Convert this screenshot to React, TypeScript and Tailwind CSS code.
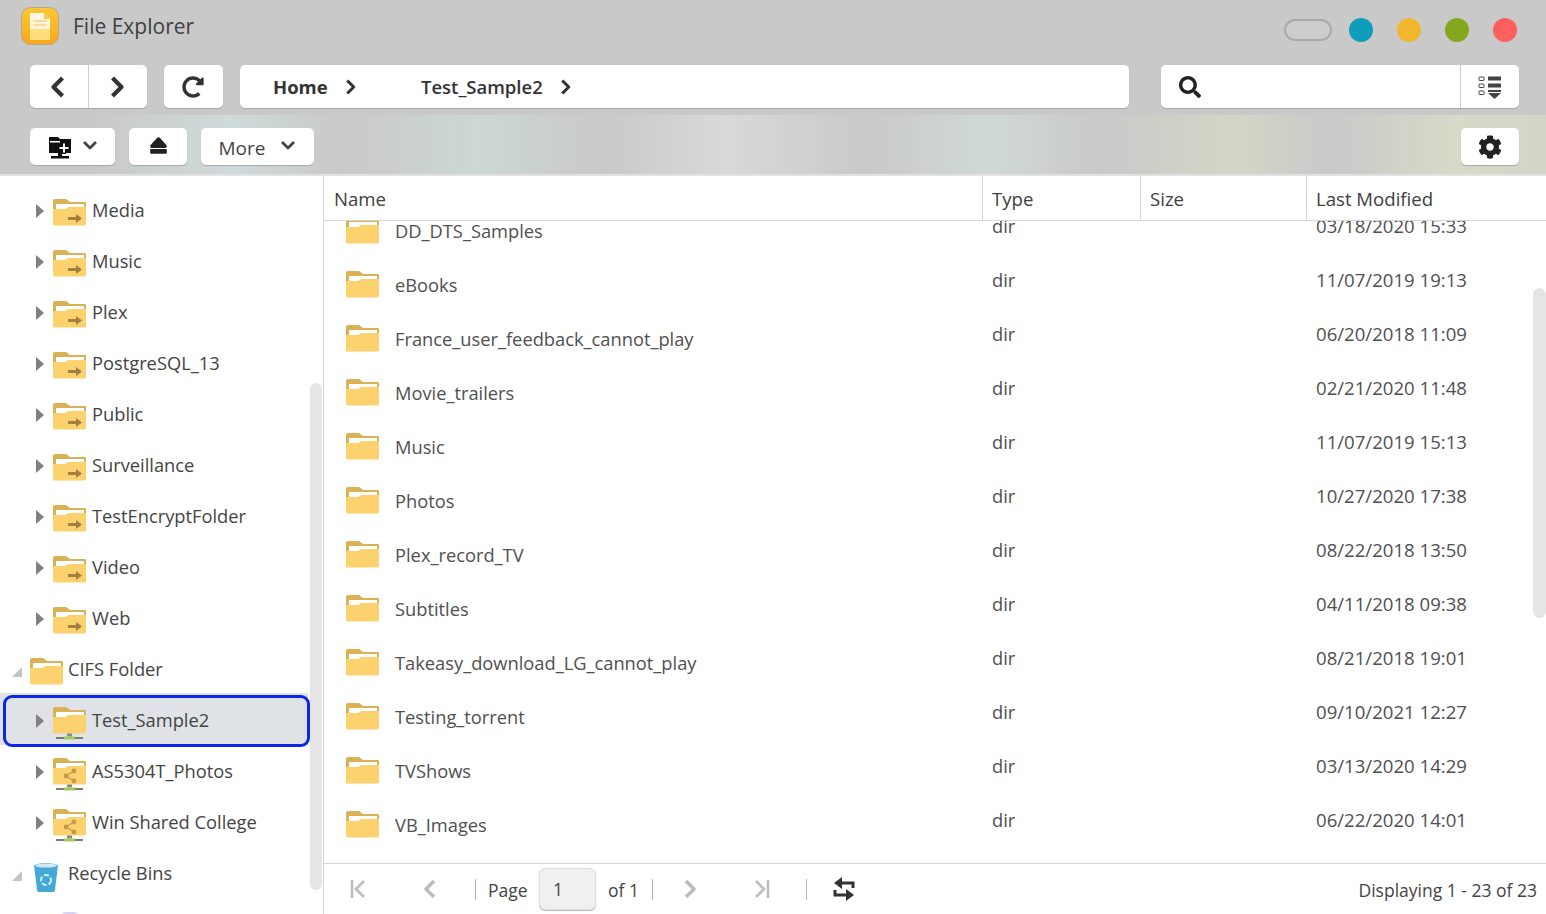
import { FaCog, FaEject, FaRedoAlt, FaSearch } from 'react-icons/fa';

const treeTop = ['Media', 'Music', 'Plex', 'PostgreSQL_13', 'Public', 'Surveillance', 'TestEncryptFolder', 'Video', 'Web'];

const files = [
  ['DD_DTS_Samples', '03/18/2020 15:33'],
  ['eBooks', '11/07/2019 19:13'],
  ['France_user_feedback_cannot_play', '06/20/2018 11:09'],
  ['Movie_trailers', '02/21/2020 11:48'],
  ['Music', '11/07/2019 15:13'],
  ['Photos', '10/27/2020 17:38'],
  ['Plex_record_TV', '08/22/2018 13:50'],
  ['Subtitles', '04/11/2018 09:38'],
  ['Takeasy_download_LG_cannot_play', '08/21/2018 19:01'],
  ['Testing_torrent', '09/10/2021 12:27'],
  ['TVShows', '03/13/2020 14:29'],
  ['VB_Images', '06/22/2020 14:01'],
];

function Chevron({ dir, className = '' }: { dir: 'left' | 'right' | 'down'; className?: string }) {
  const points = dir === 'left' ? '9,2 3,8 9,14' : dir === 'right' ? '3,2 9,8 3,14' : '2,4 8,10 14,4';
  return (
    <svg viewBox={dir === 'down' ? '0 0 16 14' : '0 0 12 16'} className={className} fill="none" stroke="currentColor" strokeWidth="2.8" strokeLinejoin="round">
      <polyline points={points} />
    </svg>
  );
}

function Folder({ kind = 'plain', className = 'w-[33px] h-[28px]' }: { kind?: 'plain' | 'arrow' | 'net' | 'share'; className?: string }) {
  const tall = kind === 'net' || kind === 'share';
  return (
    <svg viewBox={tall ? '0 0 33 33' : '0 0 33 28'} className={className}>
      <path d="M0 2 Q0 0 2 0 H13 L17 3 H32 Q33 3 33 4 V12 H0 Z" fill="#dbb155" />
      <path d="M3 5 H31 V12 H3 Z" fill="#ffffff" />
      <path d="M0 10 H12 L15 8 H33 V25 Q33 26.500 31.500 26.500 H1.500 Q0 26.500 0 25 Z" fill="#fbd26e" />
      <path d="M3 10 H12 L15 8 H31 V6 H3 Z" fill="#ffffff" />
      {kind === 'arrow' && (
        <path d="M15 18 H23 V15 L29 19.500 L23 24 V21 H15 Z" fill="#a47f40" />
      )}
      {kind === 'share' && (
        <g stroke="#c39a4c" strokeWidth="1.2" fill="#c39a4c">
          <line x1="13" y1="18" x2="21" y2="13" />
          <line x1="13" y1="18" x2="21" y2="23" />
          <circle cx="13" cy="18" r="1.800" />
          <circle cx="21" cy="13" r="1.800" />
          <circle cx="21" cy="23" r="1.800" />
        </g>
      )}
      {tall && (
        <g>
          <rect x="14" y="26.500" width="5" height="3" fill="#8a8a80" />
          <rect x="3" y="30" width="9" height="2" fill="#7c7c72" />
          <rect x="21" y="30" width="9" height="2" fill="#7c7c72" />
          <rect x="11" y="29.500" width="11" height="3" fill="#9ecb5a" />
        </g>
      )}
    </svg>
  );
}

function Caret({ open = false }: { open?: boolean }) {
  if (open) {
    return (
      <svg viewBox="0 0 10 10" className="w-[10px] h-[10px]">
        <polygon points="10,0 10,10 0,10" fill="#c4c4c4" />
      </svg>
    );
  }
  return (
    <svg viewBox="0 0 8 14" className="w-[8px] h-[14px]">
      <polygon points="0,0 8,7 0,14" fill="#808080" />
    </svg>
  );
}

function TreeChild({ label, kind, selected = false }: { label: string; kind: 'arrow' | 'net' | 'share'; selected?: boolean }) {
  return (
    <div className="relative flex h-[51px] items-center pl-[36px]">
      {selected && (
        <div className="absolute left-0 top-[-3px] h-[52px] w-[308px] bg-[#dfe3e8]">
          <div className="absolute left-[3px] top-[2px] h-[52px] w-[307px] rounded-[9px] border-[3px] border-[#0a28e6] bg-[#dfe3e8]" />
        </div>
      )}
      <span className="relative mt-[-2px] w-[17px]"><Caret /></span>
      <span className="relative w-[39px]">
        <Folder kind={kind} className={kind === 'arrow' ? 'mt-[3px] h-[28px] w-[33px]' : 'mt-[3px] h-[33px] w-[33px]'} />
      </span>
      <span className="relative mt-[-3px]">{label}</span>
    </div>
  );
}

function TreeRoot({ label, icon }: { label: string; icon: React.ReactNode }) {
  return (
    <div className="flex h-[51px] items-center pl-[12px]">
      <span className="mt-[3px] w-[18px]"><Caret open /></span>
      <span className="flex w-[38px]">{icon}</span>
      <span className="mt-[-3px]">{label}</span>
    </div>
  );
}

function Sep() {
  return <span className="h-[21px] w-px bg-[#b5b5a8]" />;
}

export default function App() {
  const btn = 'flex items-center justify-center rounded-[5px] bg-white shadow-[0_1px_1px_#a8a8a8]';
  return (
    <div className="flex h-[914px] w-[1546px] flex-col overflow-hidden bg-white font-['Open_Sans',sans-serif] text-[18.3px] text-[#444]">
      <header className="shrink-0">
        <div className="h-[115px] bg-[#c9c9c9]">
          <div className="flex h-[65px] items-start pl-[21px] pr-[29px] pt-[7px]">
            <svg viewBox="0 0 38 38" className="h-[38px] w-[38px]">
              <defs>
                <linearGradient id="logo" x1="0" y1="0" x2="0" y2="1">
                  <stop offset="0" stopColor="#fdc733" />
                  <stop offset="1" stopColor="#f6a81c" />
                </linearGradient>
              </defs>
              <rect x="0.500" y="0.500" width="37" height="37" rx="9" fill="url(#logo)" stroke="#b9a888" />
              <path d="M9 6 H23 L29 12 V22 H9 Z" fill="#fff6e0" />
              <path d="M23 6 V12 H29 Z" fill="#f8c860" />
              <path d="M12 14 H26 M12 18 H26" stroke="#f4bd4e" strokeWidth="1" />
              <rect x="9" y="22" width="20" height="11" rx="1" fill="#fedd7c" />
            </svg>
            <span className="ml-[14px] mt-[3px] text-[21px] leading-[33px] text-[#404040]">File Explorer</span>
            <div className="ml-auto mt-[11px] flex items-center">
              <span className="h-[22px] w-[48px] rounded-full border-2 border-[#aaaaaa] bg-[#cccccc]" />
              <span className="ml-[17px] h-[24px] w-[24px] rounded-full bg-[#0e9ebc]" />
              <span className="ml-[24px] h-[24px] w-[24px] rounded-full bg-[#f3b72d]" />
              <span className="ml-[24px] h-[24px] w-[24px] rounded-full bg-[#85a71d]" />
              <span className="ml-[24px] h-[24px] w-[24px] rounded-full bg-[#ff5f5f]" />
            </div>
          </div>
          <div className="flex h-[43px] pl-[30px] pr-[27px] text-[#333]">
            <div className={`${btn} w-[117px]`}>
              <span className="flex h-full w-[59px] items-center justify-center border-r border-[#cfcfcf] pr-[3px]">
                <Chevron dir="left" className="h-[24px] w-[18px] text-[#333]" />
              </span>
              <span className="flex h-full flex-1 items-center justify-center pr-[3px]">
                <Chevron dir="right" className="h-[24px] w-[18px] text-[#333]" />
              </span>
            </div>
            <div className={`${btn} ml-[17px] w-[59px] pr-[2px]`}>
              <FaRedoAlt className="h-[22px] w-[22px] text-[#333]" />
            </div>
            <div className={`${btn} ml-[17px] w-[889px] !justify-start pl-[33px]`}>
              <span className="mt-[1px] w-[71px] text-[18.5px] font-bold">Home</span>
              <Chevron dir="right" className="mt-[1px] h-[18px] w-[13px]" />
              <span className="ml-[64px] mt-[1px] text-[18.5px] font-semibold">Test_Sample2</span>
              <Chevron dir="right" className="ml-[16px] mt-[1px] h-[18px] w-[13px]" />
            </div>
            <div className={`${btn} ml-[32px] w-[358px]`}>
              <span className="flex h-full flex-1 items-center border-r border-[#cfcfcf] pl-[18px]">
                <FaSearch className="h-[22px] w-[22px] text-[#222]" />
              </span>
              <span className="flex w-[58px] items-center justify-center">
                <svg viewBox="0 0 24 24" className="h-[24px] w-[24px]" fill="#444">
                  <rect x="1" y="2" width="5" height="3.500" rx="0.500" fill="none" stroke="#444" />
                  <rect x="1" y="9" width="5" height="3.500" rx="0.500" fill="none" stroke="#444" />
                  <rect x="1" y="16" width="5" height="3.500" rx="0.500" fill="none" stroke="#444" />
                  <rect x="10" y="1.500" width="13" height="4" />
                  <rect x="10" y="8.500" width="13" height="4" />
                  <rect x="10" y="15" width="13" height="2" />
                  <polygon points="10,18 23,18 16.500,24" />
                </svg>
              </span>
            </div>
          </div>
        </div>
        <div className="flex h-[61px] border-b-2 border-[#e2e2e2] bg-[linear-gradient(90deg,#c9c9c9_6%,#cfdada_15%,#c9c9c9_22%,#ccd8d1_31%,#c9c9c9_39%,#d9d9d9_47%,#c9c9c9_56%,#d0d9d8_64%,#c9c9c9_71%,#d3d6c6_80%,#c9c9c9_86%,#d8d9c8_94%,#d3d5c8_100%)] pl-[30px] pr-[27px] pt-[13px]">
          <div className={`${btn} h-[37px] w-[85px]`}>
            <svg viewBox="0 0 26 26" className="h-[26px] w-[26px]" fill="#111">
              <path d="M1 3 H10 L12 5 H23 V19 H1 Z" />
              <rect x="2" y="7" width="10" height="1.500" fill="#fff" />
              <rect x="10" y="19" width="4" height="3" />
              <rect x="3" y="22" width="18" height="2.500" />
              <path d="M14 8 H18 V12 H22 V16 H18 V20 H14 V16 H10 V12 H14 Z" fill="#111" />
              <path d="M15 9.500 H17 V13 H20.500 V15 H17 V18.500 H15 V15 H11.500 V13 H15 Z" fill="#fff" />
            </svg>
            <Chevron dir="down" className="mb-[3px] ml-[8px] h-[14px] w-[16px] text-[#444]" />
          </div>
          <div className={`${btn} ml-[14px] h-[37px] w-[58px]`}>
            <FaEject className="mb-[3px] h-[19px] w-[19px] text-[#222]" />
          </div>
          <div className={`${btn} ml-[14px] h-[37px] w-[113px] text-[#444]`}>
            <span className="mt-[3px] text-[19px]">More</span>
            <Chevron dir="down" className="mb-[3px] ml-[15px] h-[14px] w-[16px] text-[#444]" />
          </div>
          <div className={`${btn} ml-auto h-[37px] w-[58px]`}>
            <FaCog className="h-[24px] w-[24px] text-[#222]" />
          </div>
        </div>
      </header>

      <div className="flex min-h-0 flex-1">
        <aside className="relative w-[324px] shrink-0 overflow-hidden border-r border-[#d5d5d5] pt-[10px]">
          {treeTop.map((name) => (
            <TreeChild key={name} label={name} kind="arrow" />
          ))}
          <TreeRoot label="CIFS Folder" icon={<Folder className="mt-[3px] h-[28px] w-[33px]" />} />
          <TreeChild label="Test_Sample2" kind="net" selected />
          <TreeChild label="AS5304T_Photos" kind="share" />
          <TreeChild label="Win Shared College" kind="share" />
          <TreeRoot
            label="Recycle Bins"
            icon={
              <svg viewBox="0 0 26 31" className="ml-[3px] mt-[6px] h-[31px] w-[26px]">
                <path d="M1 3 Q13 -1 25 3 L22 28 Q22 30 19 30 H7 Q4 30 4 28 Z" fill="#45a9d8" />
                <ellipse cx="13" cy="3.500" rx="11" ry="2" fill="#cfe8f5" />
                <circle cx="13" cy="18" r="5" fill="none" stroke="#d6eef9" strokeWidth="2" strokeDasharray="5 2" />
              </svg>
            }
          />
          <div className="ml-[60px] mt-[12px] h-[6px] w-[20px] rounded-t-full bg-[#d9d3f0]" />
          <div className="absolute left-[310px] top-[207px] h-[507px] w-[12px] rounded-full bg-[#e5e5e5]" />
        </aside>

        <main className="relative flex min-w-0 flex-1 flex-col">
          <div className="grid h-[45px] shrink-0 grid-cols-[659px_158px_166px_1fr] border-b border-[#d5d5d5] text-[18.6px] text-[#404040]">
            <div className="border-r border-[#d5d5d5] pl-[10px] pt-[9px]">Name</div>
            <div className="border-r border-[#d5d5d5] pl-[9px] pt-[9px]">Type</div>
            <div className="border-r border-[#d5d5d5] pl-[9px] pt-[9px]">Size</div>
            <div className="pl-[9px] pt-[9px]">Last Modified</div>
          </div>
          <div className="min-h-0 flex-1 overflow-hidden">
            <div className="mt-[-17px]">
              {files.map(([name, date]) => (
                <div key={name} className="grid h-[54px] grid-cols-[659px_158px_166px_1fr] text-[#505050]">
                  <div className="flex items-center pl-[22px]">
                    <Folder />
                    <span className="ml-[16px] mt-[-1px]">{name}</span>
                  </div>
                  <div className="flex items-center pb-[11px] pl-[9px]">dir</div>
                  <div />
                  <div className="flex items-center pb-[10px] pl-[9px] text-[18.6px]">{date}</div>
                </div>
              ))}
            </div>
          </div>
          <footer className="flex h-[51px] shrink-0 items-center border-t border-[#d5d5d5] pr-[9px] text-[17.5px] text-[#444]">
            <span className="flex w-[151px] items-center">
              <svg viewBox="0 0 16 20" className="ml-[26px] h-[20px] w-[16px]" fill="none" stroke="#bdbdbd" strokeWidth="2.600">
                <line x1="2" y1="1" x2="2" y2="19" />
                <polyline points="14,2 6,10 14,18" />
              </svg>
              <Chevron dir="left" className="ml-[56px] h-[22px] w-[16px] text-[#bdbdbd]" />
            </span>
            <Sep />
            <span className="ml-[12px] mt-[2px] w-[51px]">Page</span>
            <span className="flex h-[42px] w-[57px] items-center rounded-[6px] border border-[#dedede] bg-[#f0f0f0] pl-[13px] shadow-[0_1px_1px_#bbb]">1</span>
            <span className="ml-[12px] mt-[2px] w-[44px]">of 1</span>
            <Sep />
            <span className="flex w-[153px] items-center">
              <Chevron dir="right" className="ml-[29px] h-[22px] w-[16px] text-[#bdbdbd]" />
              <svg viewBox="0 0 16 20" className="ml-[56px] h-[20px] w-[16px]" fill="none" stroke="#bdbdbd" strokeWidth="2.600">
                <polyline points="2,2 10,10 2,18" />
                <line x1="14" y1="1" x2="14" y2="19" />
              </svg>
            </span>
            <Sep />
            <svg viewBox="0 0 24 24" className="ml-[25px] h-[24px] w-[24px]" fill="#333">
              <polygon points="10,0 2,6 10,12" />
              <polygon points="14,12 22,18 14,24" />
              <path d="M8 6 H21 V11" fill="none" stroke="#333" strokeWidth="3" />
              <path d="M16 18 H3 V13" fill="none" stroke="#333" strokeWidth="3" />
            </svg>
            <span className="ml-auto mt-[2px]">Displaying 1 - 23 of 23</span>
          </footer>
          <div className="absolute right-0 top-[112px] h-[330px] w-[13px] rounded-full bg-[#e5e5e5]" />
        </main>
      </div>
    </div>
  );
}
